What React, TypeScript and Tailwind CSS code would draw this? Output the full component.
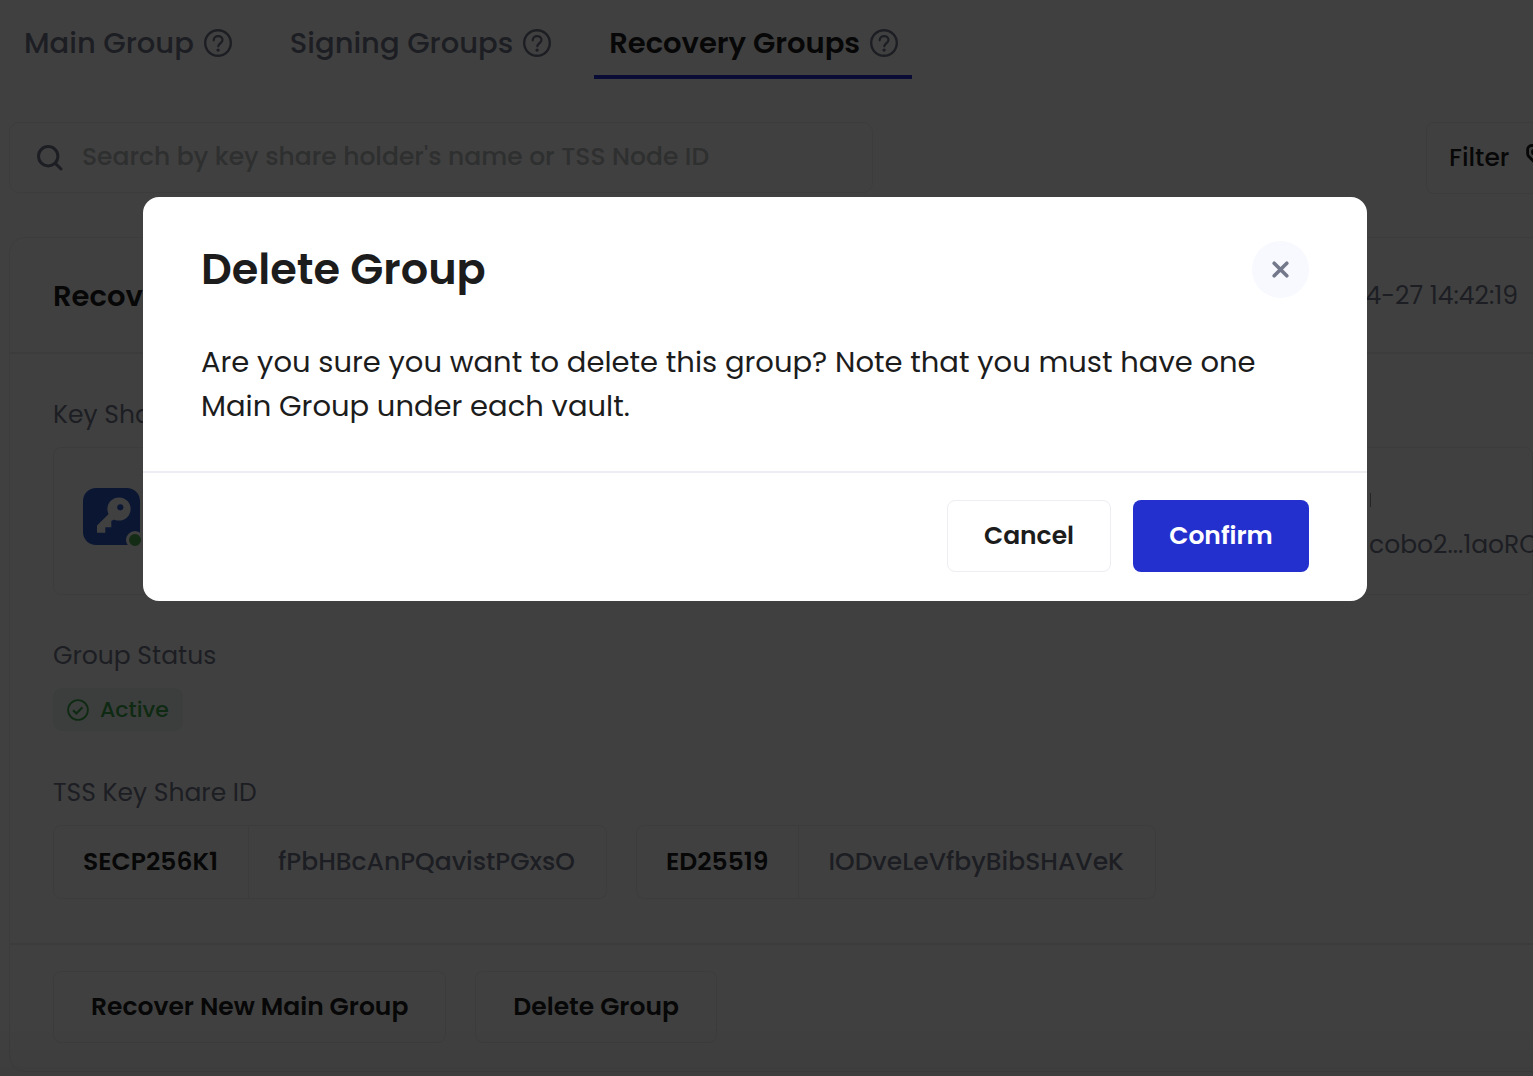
import React from "react";

function HelpIcon() {
  return (
    <svg className="size-7 shrink-0" viewBox="0 0 28 28" fill="none" stroke="#73798b" aria-hidden="true">
      <circle cx="14" cy="14" r="12.8" strokeWidth="2.4" />
      <path d="M9.7 11.3c0-2.5 1.9-4.2 4.4-4.2s4.4 1.6 4.4 4c0 3.1-4.2 3.1-4.2 6.2" strokeWidth="2.3" strokeLinecap="round" />
      <circle cx="14.1" cy="21.1" r="1.7" fill="#73798b" stroke="none" />
    </svg>
  );
}

function SearchIcon() {
  return (
    <svg className="size-[26px] shrink-0" viewBox="0 0 26 26" fill="none" stroke="#73798b" strokeWidth="3" strokeLinecap="round" aria-hidden="true">
      <circle cx="11.2" cy="11.2" r="9.7" />
      <path d="M18.4 18.4l5.6 5.6" />
    </svg>
  );
}

function TagIcon() {
  return (
    <svg className="size-7 shrink-0 self-start" viewBox="0 0 28 28" fill="none" stroke="#1c1c1e" strokeWidth="2.8" strokeLinejoin="round" aria-hidden="true">
      <path d="M1.6 5.5a4 4 0 0 1 4-4h5.6L26 16 16 26 2.8 12.4a4 4 0 0 1-1.2-2.8z" />
      <circle cx="8.4" cy="8" r="2" />
    </svg>
  );
}

function KeyBadge() {
  return (
    <div className="relative size-[57px] shrink-0">
      <svg className="size-full" viewBox="0 0 57 57" aria-hidden="true">
        <rect width="57" height="57" rx="13" fill="#2c58c8" />
        <path d="M25.7 26 14 37.5v7.2h8.3v-5.4h6V33l3.8-2z" fill="#fff" />
        <circle cx="36" cy="21" r="11.6" fill="#fff" />
        <circle cx="37.3" cy="19.3" r="3.1" fill="#2c58c8" />
      </svg>
      <span className="absolute -right-1 -bottom-1 size-[18px] rounded-full border-3 border-white bg-[#4fae55]" />
    </div>
  );
}

function Tab({ label, active = false }: { label: string; active?: boolean }) {
  return (
    <button
      role="tab"
      aria-selected={active}
      className={
        active
          ? "flex items-center gap-[10px] border-b-4 border-[#2430ce] pr-[14px] pl-[15px] text-[29px] leading-9 font-semibold text-[#1c1c1e]"
          : "flex items-center gap-[10px] border-b-4 border-transparent pr-[14px] pl-[15px] text-[29px] leading-9 font-medium text-[#73798b]"
      }
    >
      {label}
      <HelpIcon />
    </button>
  );
}

function ShareId({ curve, id }: { curve: string; id: string }) {
  return (
    <div className="flex h-[74px] items-stretch rounded-lg border border-[#ededf3]">
      <span className="flex items-center border-r border-[#ededf3] pr-[30px] pl-[29px] font-semibold text-[#1c1c1e]">{curve}</span>
      <span className="flex items-center pr-[31px] pl-[29px] font-medium text-[#73798b]">{id}</span>
    </div>
  );
}

function ActionButton({ children }: { children: React.ReactNode }) {
  return (
    <button className="h-[72px] rounded-lg border border-[#ededf3] px-[37px] font-semibold text-[#1c1c1e]">{children}</button>
  );
}

function GroupsPage() {
  return (
    <main className="-mr-11 pl-[9px]">
      <div role="tablist" className="flex h-[79px] gap-[29px] pt-[10px]">
        <Tab label="Main Group" />
        <Tab label="Signing Groups" />
        <Tab label="Recovery Groups" active />
      </div>

      <div className="mt-[43px] flex items-start justify-between">
        <label className="flex h-[71px] w-[864px] items-center gap-[19px] rounded-[10px] border border-[#ededf3] px-[27px]">
          <SearchIcon />
          <input
            type="search"
            aria-label="Search"
            placeholder="Search by key share holder's name or TSS Node ID"
            className="min-w-0 flex-1 bg-transparent pb-[2px] font-medium outline-none placeholder:text-[#b9babd]"
          />
        </label>
        <button className="flex h-[72px] w-[151px] shrink-0 items-center gap-[17px] rounded-lg border border-[#ededf3] py-[21px] pl-[22px] font-medium text-[#1c1c1e]">
          Filter
          <TagIcon />
        </button>
      </div>

      <section className="mt-[43px] rounded-2xl border border-[#ededf3]">
        <header className="flex h-[116px] items-center justify-between border-b-2 border-[#ededf3] pt-px pr-[58px] pl-[43px]">
          <h2 className="text-[29px] font-semibold text-[#1c1c1e]">Recovery</h2>
          <time className="text-[#73798b]">2023-04-27 14:42:19</time>
        </header>

        <div className="flex h-[589px] flex-col items-start px-[43px] pt-[43px] text-[#73798b]">
          <h3>Key Shares</h3>
          <div className="mt-[14px] flex h-[148px] w-full items-start justify-between rounded-lg border border-[#ededf3] pt-10 pl-[29px]">
            <KeyBadge />
            <div className="flex w-[163px] flex-col gap-5 pt-[5px] whitespace-nowrap">
              <span className="ml-px h-[14px] w-px bg-[#8d8e94]" />
              <span>cobo2...1aoRO</span>
            </div>
          </div>
          <h3 className="mt-[43px]">Group Status</h3>
          <p className="mt-[14px] flex h-[43px] items-center gap-[11px] rounded-lg bg-[#eef7f5] px-[14px] text-[22px] font-medium text-[#3fa64a]">
            <svg className="size-[22px]" viewBox="0 0 22 22" fill="none" stroke="currentColor" strokeWidth="1.8" aria-hidden="true">
              <circle cx="11" cy="11" r="9.9" />
              <path d="M6 11.2l3.4 3.2 6-6.2" strokeWidth="2.2" />
            </svg>
            Active
          </p>
          <h3 className="mt-11">TSS Key Share ID</h3>
          <div className="mt-[14px] flex gap-[29px]">
            <ShareId curve="SECP256K1" id="fPbHBcAnPQavistPGxsO" />
            <ShareId curve="ED25519" id="IODveLeVfbyBibSHAVeK" />
          </div>
        </div>

        <footer className="flex gap-[29px] border-t-2 border-[#ededf3] px-[43px] pt-[26px] pb-7">
          <ActionButton>Recover New Main Group</ActionButton>
          <ActionButton>Delete Group</ActionButton>
        </footer>
      </section>
    </main>
  );
}

function DeleteDialog() {
  return (
    <div className="absolute inset-0 flex items-start justify-center bg-black/75 pt-[197px] pr-[23px]">
      <div role="dialog" aria-modal="true" aria-labelledby="dialog-title" className="w-full max-w-[1224px] rounded-2xl bg-white text-[#1c1c1c]">
        <div className="px-[58px] pt-11 pb-[43px]">
          <div className="flex items-center justify-between">
            <h1 id="dialog-title" className="text-[43px] leading-[57px] font-semibold">Delete Group</h1>
            <button aria-label="Close" className="flex size-[57px] items-center justify-center rounded-full bg-[#f8f9fe]">
              <svg className="size-[17px]" viewBox="0 0 17 17" stroke="#73798b" strokeWidth="3.6" strokeLinecap="round" aria-hidden="true">
                <path d="M2.2 2.2l12.6 12.6M14.8 2.2L2.2 14.8" />
              </svg>
            </button>
          </div>
          <p className="mt-[42px] text-[29px] leading-[44px]">
            Are you sure you want to delete this group? Note that you must have one Main Group under each vault.
          </p>
        </div>
        <div className="flex justify-end gap-[22px] border-t-2 border-[#ededf3] px-[58px] pt-[27px] pb-[29px] font-semibold">
          <button className="h-[72px] w-[164px] rounded-lg border border-[#ededf3]">Cancel</button>
          <button className="h-[72px] w-[176px] rounded-lg bg-[#2430ce] text-white">Confirm</button>
        </div>
      </div>
    </div>
  );
}

export default function App() {
  return (
    <div className="relative h-screen overflow-hidden bg-white font-['Poppins','Inter',sans-serif] text-[25px] leading-9">
      <GroupsPage />
      <div className="absolute inset-x-0 bottom-0 h-14 bg-linear-to-b from-transparent to-black/5" />
      <DeleteDialog />
    </div>
  );
}
